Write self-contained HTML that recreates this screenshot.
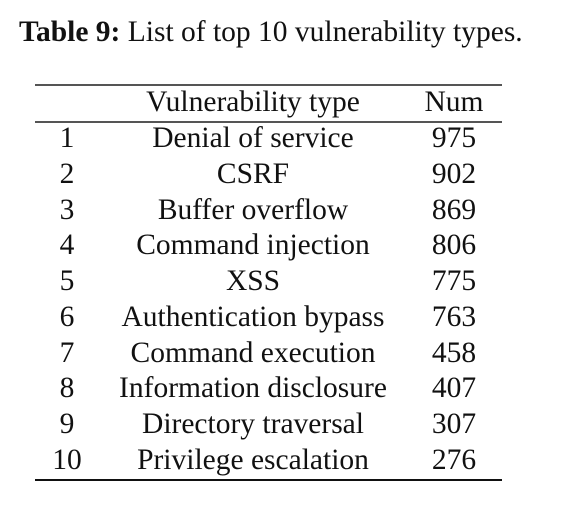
<!DOCTYPE html>
<html><head><style>
html,body{margin:0;padding:0;background:#fff;width:568px;height:505px;overflow:hidden}
body{font-family:"Liberation Serif",serif;color:#111;position:relative}
.cap{position:absolute;left:19px;top:16px;font-size:29.5px;white-space:nowrap}
.line{position:absolute;left:35px;width:467px;background:#333}
.r{position:absolute;left:0;width:568px;height:36px;font-size:29.5px;line-height:36px}
.r span{position:absolute;text-align:center;white-space:nowrap}
.a{left:37px;width:60px}.b{left:53px;width:400px}.c{left:404px;width:100px}
</style></head><body>
<div class="cap"><b>Table 9:</b> List of top 10 vulnerability types.</div>
<div class="line" style="top:84px;height:2px;background:#555"></div>
<div class="line" style="top:121px;height:2px;background:#555"></div>
<div class="line" style="top:479px;height:2px;background:#111"></div>
<div class="r" style="top:84px"><span class="a"></span><span class="b">Vulnerability type</span><span class="c">Num</span></div>
<div class="r" style="top:120px"><span class="a">1</span><span class="b">Denial of service</span><span class="c">975</span></div>
<div class="r" style="top:156px"><span class="a">2</span><span class="b">CSRF</span><span class="c">902</span></div>
<div class="r" style="top:192px"><span class="a">3</span><span class="b">Buffer overflow</span><span class="c">869</span></div>
<div class="r" style="top:227px"><span class="a">4</span><span class="b">Command injection</span><span class="c">806</span></div>
<div class="r" style="top:263px"><span class="a">5</span><span class="b">XSS</span><span class="c">775</span></div>
<div class="r" style="top:299px"><span class="a">6</span><span class="b">Authentication bypass</span><span class="c">763</span></div>
<div class="r" style="top:335px"><span class="a">7</span><span class="b">Command execution</span><span class="c">458</span></div>
<div class="r" style="top:370px"><span class="a">8</span><span class="b">Information disclosure</span><span class="c">407</span></div>
<div class="r" style="top:406px"><span class="a">9</span><span class="b">Directory traversal</span><span class="c">307</span></div>
<div class="r" style="top:442px"><span class="a">10</span><span class="b">Privilege escalation</span><span class="c">276</span></div>
</body></html>
